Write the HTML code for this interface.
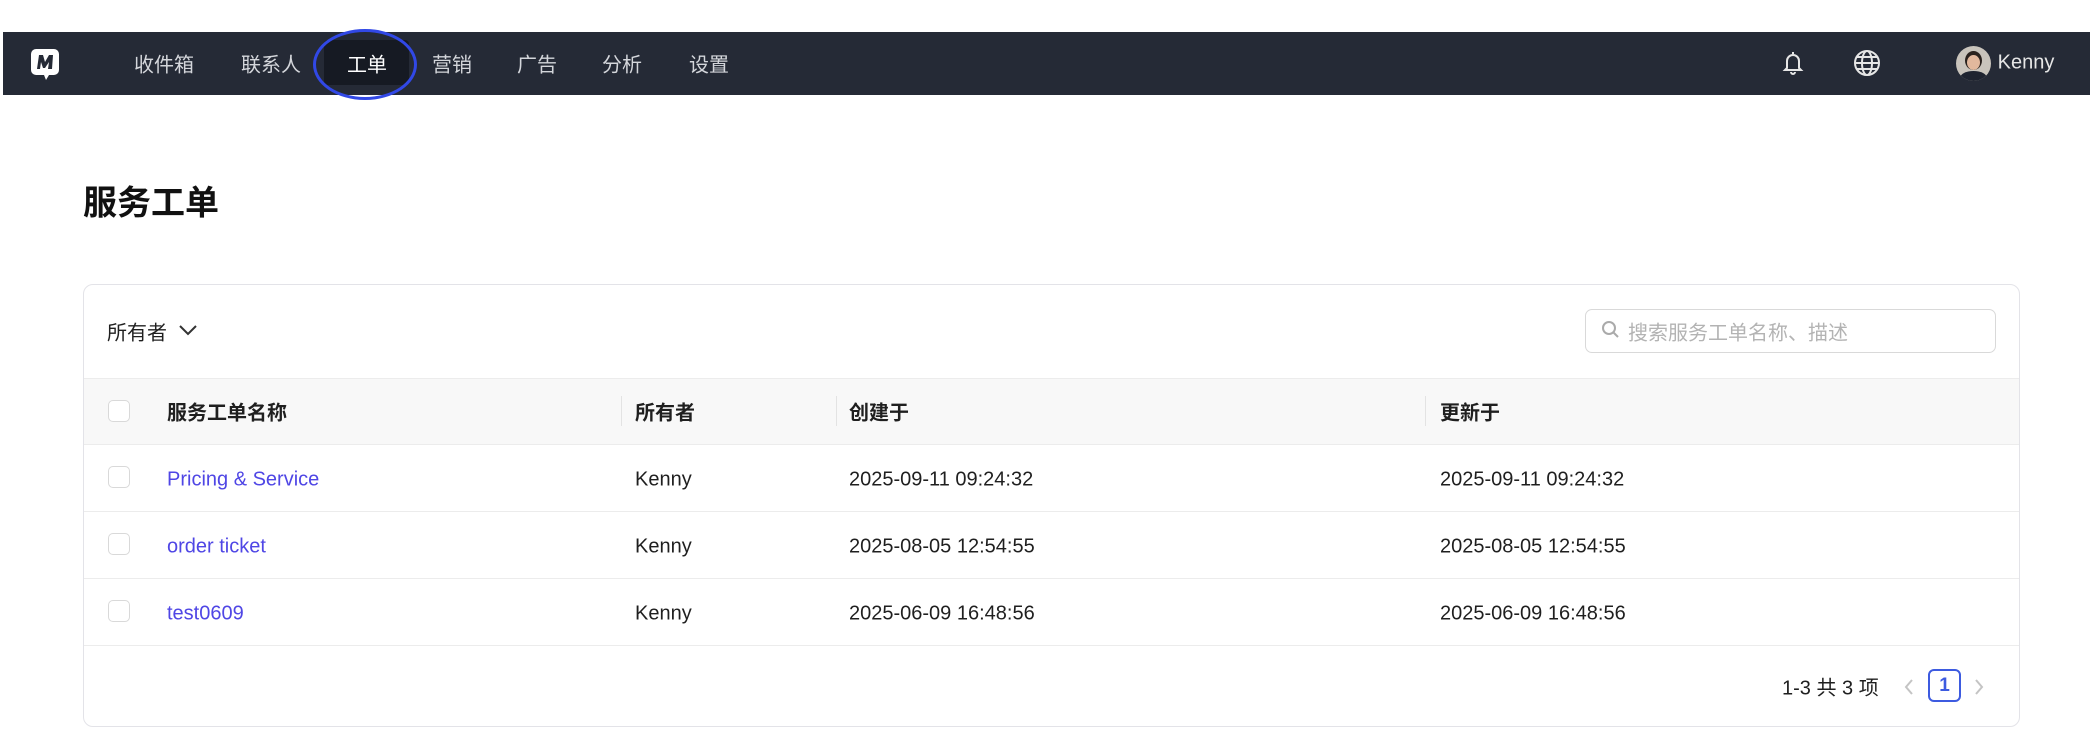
<!DOCTYPE html>
<html><head><meta charset="utf-8"><style>
*{box-sizing:border-box;margin:0;padding:0}
body{width:2090px;height:748px;background:#fff;font-family:"Liberation Sans","Noto Sans CJK SC",sans-serif;position:relative;overflow:hidden;color:#1f1f1f}
.abs{position:absolute}
.nav{left:3px;top:32px;width:2087px;height:63px;background:#252a36}
.ni{position:absolute;top:63px;transform:translate(-50%,-50%);color:#d4d6db;font-size:20px;white-space:nowrap}
.card{left:83px;top:284px;width:1937px;height:443px;border:1px solid #e3e3e8;border-radius:10px}
.cb{position:absolute;width:22px;height:22px;border:1.5px solid #d9d9d9;border-radius:5px;background:#fff}
.t{position:absolute;transform:translateY(-50%);font-size:20px;white-space:nowrap}
.hl{position:absolute;left:84px;width:1935px;height:1px;background:#ececec}
.lk{color:#4f46e5}
.h{font-weight:600}
</style></head><body>
<div class="abs nav"></div>
<svg class="abs" style="left:30px;top:47px" width="30" height="34" viewBox="0 0 30 34"><path d="M6 2h18a5 5 0 0 1 5 5v16a5 5 0 0 1-5 5h-5l-3 5-2-5H6a5 5 0 0 1-5-5V7a5 5 0 0 1 5-5z" fill="#fff"/><path d="M7 22l2-14h4l2 7 4-7h4l-1 14h-4l1-7-4 6h-2l-2-6-1 7z" fill="#252a36"/></svg>
<div class="abs" style="left:324px;top:40px;width:85px;height:45px;background:#161a23;border-radius:4px"></div>
<div class="abs" style="left:313px;top:29px;width:104px;height:71px;border:3px solid #3148e6;border-radius:50%"></div>
<div class="ni" style="left:164px">收件箱</div>
<div class="ni" style="left:271px">联系人</div>
<div class="ni" style="left:367px;color:#fff">工单</div>
<div class="ni" style="left:452px">营销</div>
<div class="ni" style="left:537px">广告</div>
<div class="ni" style="left:622px">分析</div>
<div class="ni" style="left:709px">设置</div>
<svg class="abs" style="left:1781px;top:50px" width="24" height="26" viewBox="0 0 24 26" fill="none" stroke="#e6e6e6" stroke-width="2"><path d="M12 2v2M6 18V11a6 6 0 0 1 12 0v7l2 2H4z"/><path d="M10 22a2 2 0 0 0 4 0"/></svg>
<svg class="abs" style="left:1853px;top:49px" width="28" height="28" viewBox="0 0 28 28" fill="none" stroke="#e6e6e6" stroke-width="2"><circle cx="14" cy="14" r="12"/><ellipse cx="14" cy="14" rx="5" ry="12"/><path d="M2 14h24M4 8h20M4 20h20"/></svg>
<div class="abs" style="left:1956px;top:46px;width:35px;height:35px;border-radius:50%;background:#c9c4bc;overflow:hidden"><div style="position:absolute;left:9px;top:5px;width:17px;height:19px;border-radius:50%;background:#2a221e"></div><div style="position:absolute;left:11px;top:9px;width:13px;height:15px;border-radius:50%;background:#e2b89d"></div><div style="position:absolute;left:4px;top:25px;width:27px;height:14px;border-radius:50% 50% 0 0;background:#1f2430"></div></div>
<div class="ni" style="left:2026px;color:#e6e6e6">Kenny</div>

<div class="abs" style="left:83px;top:200px;transform:translateY(-50%);font-size:34px;font-weight:bold;color:#111">服务工单</div>

<div class="abs card"></div>
<div class="t" style="left:107px;top:331px">所有者</div>
<svg class="abs" style="left:178px;top:323px" width="20" height="14" viewBox="0 0 20 14" fill="none" stroke="#333" stroke-width="2"><path d="M2 3l8 8 8-8"/></svg>
<div class="abs" style="left:1585px;top:309px;width:411px;height:44px;border:1.5px solid #d9d9d9;border-radius:7px"></div>
<svg class="abs" style="left:1601px;top:320px" width="20" height="20" viewBox="0 0 20 20" fill="none" stroke="#aaa" stroke-width="2"><circle cx="8" cy="8" r="6"/><path d="M12.5 12.5L17 17"/></svg>
<div class="t" style="left:1628px;top:331px;color:#b3b3b3">搜索服务工单名称、描述</div>

<div class="abs" style="left:84px;top:379px;width:1935px;height:65px;background:#f8f8f8"></div>
<div class="hl" style="top:378px"></div>
<div class="hl" style="top:444px"></div>
<div class="hl" style="top:511px"></div>
<div class="hl" style="top:578px"></div>
<div class="hl" style="top:645px"></div>
<div class="abs" style="left:621px;top:396px;width:1px;height:30px;background:#e3e3e3"></div>
<div class="abs" style="left:836px;top:396px;width:1px;height:30px;background:#e3e3e3"></div>
<div class="abs" style="left:1425px;top:396px;width:1px;height:30px;background:#e3e3e3"></div>

<div class="cb" style="left:108px;top:400px"></div>
<div class="t h" style="left:167px;top:411px">服务工单名称</div>
<div class="t h" style="left:635px;top:411px">所有者</div>
<div class="t h" style="left:849px;top:411px">创建于</div>
<div class="t h" style="left:1440px;top:411px">更新于</div>

<div class="cb" style="left:108px;top:466px"></div>
<div class="t lk" style="left:167px;top:480px">Pricing &amp; Service</div>
<div class="t" style="left:635px;top:480px">Kenny</div>
<div class="t" style="left:849px;top:480px">2025-09-11 09:24:32</div>
<div class="t" style="left:1440px;top:480px">2025-09-11 09:24:32</div>

<div class="cb" style="left:108px;top:533px"></div>
<div class="t lk" style="left:167px;top:547px">order ticket</div>
<div class="t" style="left:635px;top:547px">Kenny</div>
<div class="t" style="left:849px;top:547px">2025-08-05 12:54:55</div>
<div class="t" style="left:1440px;top:547px">2025-08-05 12:54:55</div>

<div class="cb" style="left:108px;top:600px"></div>
<div class="t lk" style="left:167px;top:614px">test0609</div>
<div class="t" style="left:635px;top:614px">Kenny</div>
<div class="t" style="left:849px;top:614px">2025-06-09 16:48:56</div>
<div class="t" style="left:1440px;top:614px">2025-06-09 16:48:56</div>

<div class="t" style="left:1782px;top:686px">1-3 共 3 项</div>
<svg class="abs" style="left:1902px;top:678px" width="14" height="18" viewBox="0 0 14 18" fill="none" stroke="#c4c4c4" stroke-width="2"><path d="M10 2L4 9l6 7"/></svg>
<div class="abs" style="left:1928px;top:669px;width:33px;height:33px;border:2px solid #3d5be0;border-radius:6px;color:#3d5be0;font-size:19px;font-weight:bold;text-align:center;line-height:29px">1</div>
<svg class="abs" style="left:1972px;top:678px" width="14" height="18" viewBox="0 0 14 18" fill="none" stroke="#c4c4c4" stroke-width="2"><path d="M4 2l6 7-6 7"/></svg>
</body></html>
